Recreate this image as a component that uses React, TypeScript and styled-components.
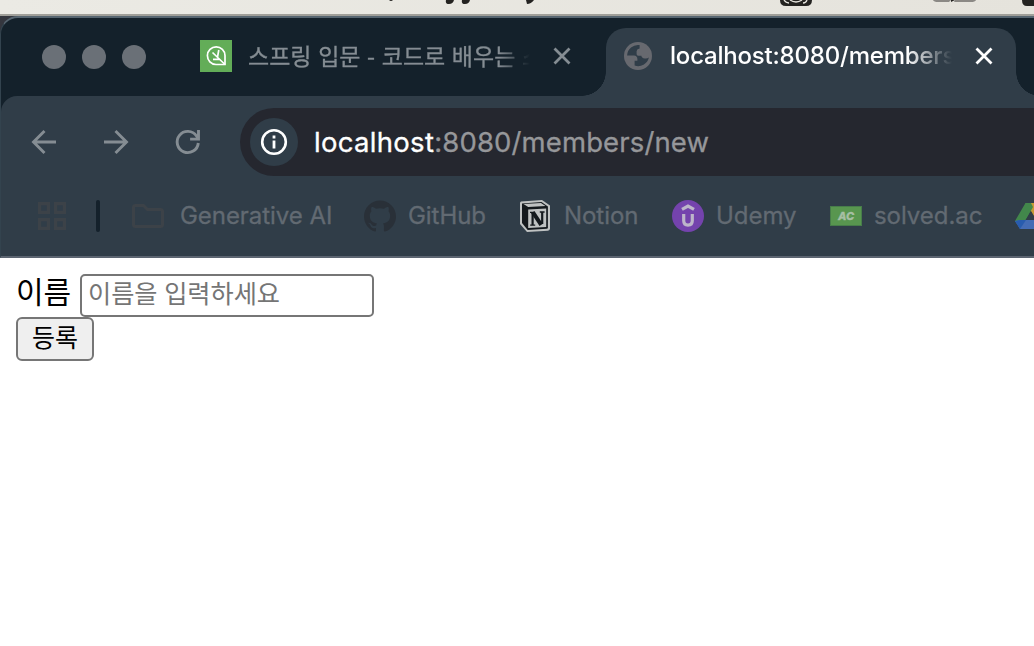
import React from 'react';
import styled, { createGlobalStyle } from 'styled-components';
import { SiGithub } from 'react-icons/si';

const latin = `Inter, "Noto Sans CJK KR", sans-serif`;
const korean = `"Noto Sans CJK KR", sans-serif`;

const GlobalStyle = createGlobalStyle`
  * { box-sizing: border-box; }
  body { margin: 0; background: #fff; overflow: hidden; }
  svg { display: block; flex: none; }
`;

const Screen = styled.div`
  width: 1034px;
  height: 646px;
  overflow: hidden;
  display: flex;
  flex-direction: column;
  background: #fff;
`;

const MenuBar = styled.div`
  height: 16px;
  flex: none;
  background: linear-gradient(90deg, #ebeae4, #e5e3dc);
  border-bottom: 2px solid #a09f99;
`;

const Corner = styled.div`
  flex: none;
  background: #34363e;
`;

const BrowserWindow = styled.div`
  height: 242px;
  display: flex;
  flex-direction: column;
  background: #14212b;
  border-top: 2px solid #566570;
  border-left: 1px solid #33434e;
  border-bottom: 2px solid #5c6571;
  border-top-left-radius: 18px;
  overflow: hidden;
`;

const TabStrip = styled.div`
  height: 78px;
  flex: none;
  display: flex;
  align-items: flex-end;
`;

const TrafficLights = styled.div`
  display: flex;
  gap: 16px;
  width: 199px;
  height: 68px;
  padding: 17px 0 0 41px;
`;

const Light = styled.span`
  width: 24px;
  height: 24px;
  border-radius: 50%;
  background: #6a7077;
`;

const Tab = styled.div<{ $active?: boolean }>`
  position: relative;
  width: ${p => (p.$active ? 410 : 406)}px;
  height: 68px;
  flex: none;
  display: flex;
  align-items: center;
  padding: 0 ${p => (p.$active ? '22px 12px 18px' : '34px 12px 0')};
  border-radius: 20px 20px 0 0;
  background: ${p => (p.$active ? '#303d48' : 'transparent')};
  color: ${p => (p.$active ? '#fff' : '#858d93')};

  &::before, &::after {
    content: ${p => (p.$active ? "''" : 'none')};
    position: absolute;
    bottom: 0;
    width: 24px;
    height: 24px;
  }
  &::before {
    right: 100%;
    background: radial-gradient(circle at 0 0, transparent 23.5px, #303d48 24px);
  }
  &::after {
    left: 100%;
    background: radial-gradient(circle at 100% 0, transparent 23.5px, #303d48 24px);
  }
`;

const TabTitle = styled.div<{ $active?: boolean }>`
  width: 282px;
  margin-left: ${p => (p.$active ? 18 : 16)}px;
  margin-right: 23px;
  flex: none;
  height: 36px;
  overflow: hidden;
  white-space: nowrap;
  font: ${p => (p.$active ? `500 24px/36px ${latin}` : `400 23px/34px ${korean}`)};
  letter-spacing: ${p => (p.$active ? '-0.2px' : '0')};
  word-spacing: ${p => (p.$active ? '0' : '1.5px')};
  -webkit-text-stroke: ${p => (p.$active ? '0' : '0.3px currentColor')};
  mask-image: linear-gradient(90deg, #000 ${p => (p.$active ? '84%' : '89%')}, transparent 100%);
`;

const Chrome = styled.div`
  flex: 1;
  background: #303d48;
  border-top-left-radius: 16px;
`;

const Toolbar = styled.div`
  height: 92px;
  display: flex;
  align-items: center;
  padding-left: 25px;
  color: #858d93;
`;

const NavButton = styled.span`
  width: 36px;
  margin-right: 36px;
  flex: none;
`;

const AddressBar = styled.div`
  flex: 1;
  height: 68px;
  margin-left: -2px;
  padding-left: 10px;
  display: flex;
  align-items: center;
  gap: 16px;
  background: #25272f;
  border-radius: 34px 0 0 34px;
`;

const SiteInfo = styled.span`
  width: 48px;
  height: 48px;
  display: grid;
  place-items: center;
  border-radius: 50%;
  background: #303d48;
`;

const Url = styled.span`
  font: 400 27.5px/40px ${latin};
  letter-spacing: 0.13px;
  -webkit-text-stroke: 0.3px currentColor;
  color: #96979a;
  white-space: nowrap;
`;

const Host = styled.span`
  color: #fff;
  letter-spacing: 0.3px;
`;

const Bookmarks = styled.div`
  height: 56px;
  display: flex;
  align-items: center;
  padding-left: 35px;
`;

const Divider = styled.span`
  width: 4px;
  height: 32px;
  margin: 0 32px 0 28px;
  flex: none;
  border-radius: 2px;
  background: #14212b;
`;

const Bookmark = styled.span<{ $width: number; $gap?: number }>`
  width: ${p => p.$width}px;
  flex: none;
  display: flex;
  align-items: center;
  gap: ${p => p.$gap ?? 12}px;
  font: 400 24px/32px ${latin};
  letter-spacing: -0.05px;
  -webkit-text-stroke: 0.3px currentColor;
  color: #626a72;
  white-space: nowrap;
`;

const Page = styled.main`
  padding: 16px;
  display: flex;
  flex-direction: column;
  align-items: flex-start;
`;

const Field = styled.label`
  display: flex;
  height: 43px;
  font: 400 30px/32px ${korean};
  color: #000;
`;

const FieldName = styled.span`
  width: 64px;
`;

const NameInput = styled.input`
  width: 294px;
  height: 43px;
  padding: 0 6px 7px;
  border: 2px solid #767676;
  border-radius: 5px;
  outline: none;
  font: 400 25.2px/32px ${korean};
  word-spacing: 1px;
  &::placeholder { color: #757575; opacity: 1; }
`;

const SubmitButton = styled.button`
  width: 78px;
  height: 44px;
  padding: 0 0 6px;
  border: 2px solid #767676;
  border-radius: 6px;
  background: #efefef;
  color: #000;
  font: 400 25px/34px ${korean};
`;

const MenuBarIcons = () => (
  <svg width="1034" height="14" viewBox="0 0 1034 14" fill="#242321">
    <path d="M389 0h4q-1 1-2 1t-2-1zM446 0h8q-1 4-5 4t-3-4zM462 0h8q-1 4-5 4t-3-4zM526 0h8q-3 4-7 4zM1022 0h12v6h-7q-5 0-5-6z" />
    <path d="M780 0h32q0 6-6 6h-20q-6 0-6-6z" />
    <path d="M784 0q2 3 5 3M807 0q-1 3-4 3M790 0q6 4 12 0" fill="none" stroke="#e8e6e0" strokeWidth="1.3" />
    <path d="M933 0h18l-2 2h-11q-4 0-5-2zM955 0h21q-1 2-5 2h-17z" fill="#8b8985" />
    <path d="M951 0h4l-4 2z" />
  </svg>
);

const SpringIcon = () => (
  <svg width="32" height="32" viewBox="0 0 32 32">
    <path fill="#63ad58" d="M0 0h32v32H0z" />
    <g fill="none" stroke="#fff" strokeWidth="1.7">
      <path d="M25 24.5H16A8.8 8.8 0 1 1 25 15.6z" />
      <path d="M25 24.5 12.5 12.5M17.5 17.2 18.8 10M13 19.3h6.5" />
    </g>
  </svg>
);

const CloseIcon = () => (
  <svg width="18" height="18" viewBox="0 0 18 18" stroke="currentColor" strokeWidth="2.8">
    <path d="m1.5 1.5 15 15m0-15-15 15" />
  </svg>
);

const GlobeIcon = () => (
  <svg width="28" height="28" viewBox="0 0 28 28">
    <circle cx="14" cy="14" r="14" fill="#67696f" />
    <path fill="#303d48" d="M15.6 3.1A11 11 0 0 0 3.1 13.6H10q3.2.3 3.4 3.5v1.6h-2.8v4.8A11 11 0 0 0 24.9 15.6q-1.8 1.1-4.2.8-3.2-.4-3.3-2.7h-3.2q-1.6-.2-1.6-1.8V9.2q.4-2.4 3-2.6z" />
  </svg>
);

const ArrowIcon = ({ forward = false }: { forward?: boolean }) => (
  <svg width="36" height="36" viewBox="0 0 36 36" fill="none" stroke="currentColor" strokeWidth="2.9">
    <path d={forward ? 'M6 18h23M17.5 7 28.5 18l-11 11' : 'M30 18H7M18.5 7 7.5 18l11 11'} />
  </svg>
);

const ReloadIcon = () => (
  <svg width="36" height="36" viewBox="0 0 36 36" fill="none" stroke="currentColor" strokeWidth="2.9">
    <path d="M28.3 19A10.6 10.6 0 1 1 26.5 12l1.9 2.7M28.5 6v9.1H20.1" />
  </svg>
);

const InfoIcon = () => (
  <svg width="28" height="28" viewBox="0 0 28 28">
    <circle cx="14" cy="14" r="11.8" fill="none" stroke="#fff" strokeWidth="2.6" />
    <path fill="#fff" d="M12.6 7.6h2.8v2.8h-2.8zM12.6 12.5h2.8v8h-2.8z" />
  </svg>
);

const AppsIcon = () => (
  <svg width="32" height="32" viewBox="0 0 32 32" fill="none" stroke="#3c4248" strokeWidth="3.2">
    <path d="M3.6 3.6h8.8v8.8H3.6zM19.6 3.6h8.8v8.8h-8.8zM3.6 19.6h8.8v8.8H3.6zM19.6 19.6h8.8v8.8h-8.8z" />
  </svg>
);

const FolderIcon = () => (
  <svg width="32" height="24" viewBox="0 0 32 24" fill="none" stroke="#3c4248" strokeWidth="3">
    <path d="M3.5 1.5h8l4 4h13q2 0 2 2v13q0 2-2 2h-25q-2 0-2-2v-17q0-2 2-2z" />
  </svg>
);

const NotionIcon = () => (
  <svg width="32" height="32" viewBox="0 0 32 32">
    <path fill="#bfc2c2" d="M2 1.5 23 0l8 5.5v23q0 2-2 2.3L8 32 1 24V3q0-1 1-1.5z" />
    <path fill="#14191d" d="m3 3.5 19.5-1.4 6.4 4.5v20.8q0 1.2-1.3 1.4L8.7 30 3 23.1z" />
    <path fill="#bfc2c2" d="M4.5 4 22 2.9 26.5 6 9.2 7.1zM9.2 9.5 27.2 8.4v18.6L9.2 28.1z" />
    <path stroke="#14191d" strokeWidth="2.2" d="M13.6 12.5V25M23.2 12v12" />
    <path stroke="#14191d" strokeWidth="4" d="m13.8 12.2 8.4 12.6" />
    <path stroke="#14191d" strokeWidth="1.4" d="M11 12.4h4M20.8 12h4.8M11.2 25.1h5" />
  </svg>
);

const UdemyIcon = () => (
  <svg width="32" height="32" viewBox="0 0 32 32">
    <circle cx="16" cy="16" r="16" fill="#7443ad" />
    <path fill="none" stroke="#bdb5ca" strokeWidth="3.2" d="m10 9.4 6-3.4 6 3.4M11.7 14v6.6q0 4.6 4.3 4.6t4.3-4.6V14" />
  </svg>
);

const SolvedBadge = styled.span`
  width: 32px;
  height: 20px;
  display: grid;
  place-items: center;
  background: #58964f;
  border: 1px solid #477d4a;
  color: #a6bfa4;
  font: italic 800 11px/17px ${latin};
`;

const DriveIcon = () => (
  <svg width="32" height="28" viewBox="0 0 32 28">
    <path fill="#c79a35" d="M10.5 1h11L32 18H21z" />
    <path fill="#42874b" d="M10.5 1H16l2 4-2.5 4.5L6 27 0 19z" />
    <path fill="#303d48" d="m16 9 5.5 9h-11z" />
    <path fill="#446cb5" d="M6 18h26l-5 9H5l-5-8z" />
    <path fill="#285cae" d="M5 18h6L5 27l-5-8z" />
  </svg>
);

export default function App() {
  return (
    <Screen>
      <GlobalStyle />
      <MenuBar><MenuBarIcons /></MenuBar>
      <Corner>
        <BrowserWindow>
          <TabStrip>
            <TrafficLights><Light /><Light /><Light /></TrafficLights>
            <Tab>
              <SpringIcon />
              <TabTitle>스프링 입문 - 코드로 배우는 스프링</TabTitle>
              <CloseIcon />
            </Tab>
            <Tab $active>
              <GlobeIcon />
              <TabTitle $active>localhost:8080/members</TabTitle>
              <CloseIcon />
            </Tab>
          </TabStrip>
          <Chrome>
            <Toolbar>
              <NavButton><ArrowIcon /></NavButton>
              <NavButton><ArrowIcon forward /></NavButton>
              <NavButton><ReloadIcon /></NavButton>
              <AddressBar>
                <SiteInfo><InfoIcon /></SiteInfo>
                <Url><Host>localhost</Host>:8080/members/new</Url>
              </AddressBar>
            </Toolbar>
            <Bookmarks>
              <AppsIcon />
              <Divider />
              <Bookmark $width={232} $gap={16}><FolderIcon />Generative AI</Bookmark>
              <Bookmark $width={155}><SiGithub size={32} color="#293038" />GitHub</Bookmark>
              <Bookmark $width={153} $gap={13}><NotionIcon />Notion</Bookmark>
              <Bookmark $width={158}><UdemyIcon />Udemy</Bookmark>
              <Bookmark $width={185}><SolvedBadge>AC</SolvedBadge>solved.ac</Bookmark>
              <DriveIcon />
            </Bookmarks>
          </Chrome>
        </BrowserWindow>
      </Corner>
      <Page>
        <Field>
          <FieldName>이름</FieldName>
          <NameInput placeholder="이름을 입력하세요" />
        </Field>
        <SubmitButton type="button">등록</SubmitButton>
      </Page>
    </Screen>
  );
}
